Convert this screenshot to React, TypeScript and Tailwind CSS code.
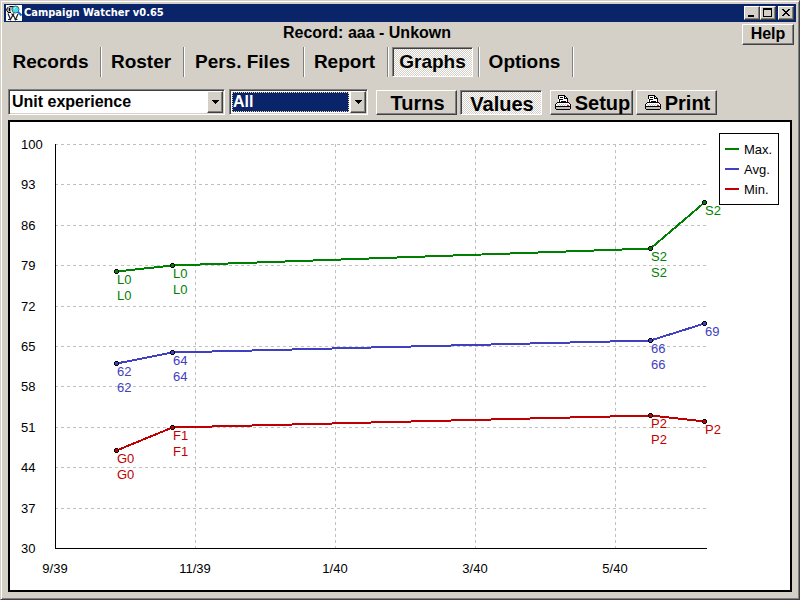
import type { ReactNode } from "react";

const font = "font-['Liberation_Sans',Arial,sans-serif]";
const raised =
  "border border-t-white border-l-white border-r-[#404040] border-b-[#404040] bg-[#d4d0c8] shadow-[inset_-1px_-1px_0_#808080]";
const pressed =
  "border border-t-[#808080] border-l-[#808080] border-r-white border-b-white shadow-[inset_1px_1px_0_#404040] bg-[repeating-conic-gradient(#ffffff_0_25%,#d4d0c8_0_50%)] bg-size-[2px_2px]";

const tabs = [
  { name: "Records", width: "w-[98px]" },
  { name: "Roster", width: "w-[83px]" },
  { name: "Pers. Files", width: "w-[120px]" },
  { name: "Report", width: "w-[84px]" },
  { name: "Graphs", width: "w-[91px]" },
  { name: "Options", width: "w-[94px]" },
];

function AppIcon() {
  return (
    <svg width="16" height="16" viewBox="0 0 16 16" className="shrink-0 bg-white">
      <path d="M2 1.5h4L5 7H2.5L1 5V3z" fill="#a0a0a0" />
      <path d="M3.5 1.5h8M1.5 2.5L.5 5l1.5 2.5h3M3.5 3v3" fill="none" stroke="#000" />
      <circle cx="9.5" cy="4.5" r="3.5" fill="#40e0e8" stroke="#506070" />
      <path d="M8 3.5l1.500-1" stroke="#fff" />
      <path d="M12 7l3.500 3.500" stroke="#1060d0" strokeWidth="2" />
      <path d="M2 8.500l2.500 6 2.500-5 2.500 5 2.500-5.500M5.500 8.500l1.500 2 1-2M2 14.500h3M8.500 14.500h3" fill="none" stroke="#202020" strokeWidth="1.200" />
    </svg>
  );
}

function PrinterIcon() {
  return (
    <svg width="16" height="16" viewBox="0 0 16 16" shapeRendering="crispEdges" aria-hidden="true">
      <path d="M4 1h6l2 3v5H3V4h1z" fill="#fff" />
      <path d="M3 0h7v1H3zM3 1h1v3H3zM4 4h1v3H4zM10 1h1v1h-1zM11 2h1v1h-1zM9 1h1v3H9zM10 3h3v1h-3zM12 4h1v3h-1zM5 2h3v1H5zM5 4h3v1H5zM6 6h5v1H6z" fill="#000" />
      <path d="M1 8h14v6H1z" fill="#fff" />
      <path d="M1 12h14v2H1z" fill="#c0c0c0" />
      <path d="M2 9h1v1H2zM4 9h1v1H4zM6 9h1v1H6zM8 9h1v1H8zM10 9h1v1h-1zM12 9h1v1h-1zM3 10h1v1H3zM5 10h1v1H5zM7 10h1v1H7zM9 10h1v1H9z" fill="#c0c0c0" />
      <path d="M2 7h12v1H2zM1 8h1v1H1zM14 8h1v1h-1zM0 9h1v5H0zM15 9h1v5h-1zM1 11h14v1H1zM1 14h14v1H1z" fill="#000" />
      <path d="M12 10h2v1h-2z" fill="#f00" />
    </svg>
  );
}

function ToolButton({ children, width, active = false }: { children: ReactNode; width: string; active?: boolean }) {
  return (
    <button
      aria-pressed={active}
      className={`flex h-[25px] shrink-0 items-center justify-center gap-1 text-[20px] leading-5 font-bold ${width} ${active ? `${pressed} pt-1 pl-0.5` : `${raised} pt-0.5 pl-0.5`}`}
    >
      {children}
    </button>
  );
}

function Combo({ label, value, width, focused = false }: { label: string; value: string; width: string; focused?: boolean }) {
  return (
    <div
      className={`relative h-[26px] shrink-0 border border-t-[#808080] border-l-[#808080] border-r-white border-b-white bg-white p-0.5 shadow-[inset_1px_1px_0_#404040,inset_-1px_-1px_0_#d4d0c8] ${width}`}
    >
      <select
        aria-label={label}
        className={`block h-5 w-[calc(100%-16px)] appearance-none text-[16px] leading-4 font-bold outline-none ${focused ? "border border-dotted border-[#f5db95] bg-[#0a246a] text-white" : "pl-px"}`}
      >
        <option>{value}</option>
      </select>
      <span className={`pointer-events-none absolute top-px right-px flex h-[22px] w-4 items-center justify-center ${raised}`}>
        <svg width="7" height="4" viewBox="0 0 7 4" shapeRendering="crispEdges">
          <path d="M0 0h7v1H0zM1 1h5v1H1zM2 2h3v1H2zM3 3h1v1H3z" />
        </svg>
      </span>
    </div>
  );
}

const rows = [
  { label: "100", y: 144 },
  { label: "93", y: 184 },
  { label: "86", y: 225 },
  { label: "79", y: 265 },
  { label: "72", y: 306 },
  { label: "65", y: 346 },
  { label: "58", y: 386 },
  { label: "51", y: 427 },
  { label: "44", y: 467 },
  { label: "37", y: 508 },
  { label: "30", y: 548 },
];
const columns = [
  { label: "9/39", x: 55 },
  { label: "11/39", x: 195 },
  { label: "1/40", x: 335 },
  { label: "3/40", x: 475 },
  { label: "5/40", x: 615 },
];
const series = [
  {
    name: "Max.",
    color: "#008000",
    points: [
      { x: 116, y: 271, labels: ["L0", "L0"] },
      { x: 172, y: 265, labels: ["L0", "L0"] },
      { x: 650, y: 248, labels: ["S2", "S2"] },
      { x: 704, y: 202, labels: ["S2"] },
    ],
  },
  {
    name: "Avg.",
    color: "#4040c0",
    points: [
      { x: 116, y: 363, labels: ["62", "62"] },
      { x: 172, y: 352, labels: ["64", "64"] },
      { x: 650, y: 340, labels: ["66", "66"] },
      { x: 704, y: 323, labels: ["69"] },
    ],
  },
  {
    name: "Min.",
    color: "#c00000",
    points: [
      { x: 116, y: 450, labels: ["G0", "G0"] },
      { x: 172, y: 427, labels: ["F1", "F1"] },
      { x: 650, y: 415, labels: ["P2", "P2"] },
      { x: 704, y: 421, labels: ["P2"] },
    ],
  },
];

function Chart() {
  return (
    <svg
      viewBox="10 122 780 468"
      preserveAspectRatio="xMinYMin meet"
      className="h-full w-full text-[13px]"
      shapeRendering="crispEdges"
      role="img"
      aria-label="Unit experience over time"
    >
      <g fill="none" stroke="#c0c0c0" strokeDasharray="3 3">
        {rows.slice(0, -1).map((r) => (
          <path key={r.y} d={`M55 ${r.y + 0.5}H706`} />
        ))}
        {columns.slice(1).map((c) => (
          <path key={c.x} d={`M${c.x + 0.5} 144V548`} />
        ))}
      </g>
      <path d="M55.5 144V548.5H707" fill="none" stroke="#000" />
      {rows.map((r) => (
        <text key={r.y} x="21" y={r.y + 5}>
          {r.label}
        </text>
      ))}
      {columns.map((c) => (
        <text key={c.x} x={c.x} y="573" textAnchor="middle">
          {c.label}
        </text>
      ))}
      {series.map((s) => (
        <g key={s.name}>
          <polyline points={s.points.map((p) => `${p.x},${p.y}`).join(" ")} transform="translate(0.5 0.5)" fill="none" stroke={s.color} strokeWidth="2" />
          {s.points.map((p) => (
            <g key={p.x}>
              <path d={`M${p.x - 1} ${p.y - 2}h3v1h1v3h-1v1h-3v-1h-1v-3h1z`} fill="#000" />
              <rect x={p.x - 1} y={p.y - 1} width="3" height="3" fill={s.color} />
              {p.labels.map((t, i) => (
                <text key={i} x={p.x + 1} y={p.y + 13 + i * 16} fill={s.color}>
                  {t}
                </text>
              ))}
            </g>
          ))}
        </g>
      ))}
      <rect x="719.5" y="133.5" width="59" height="71" fill="#fff" stroke="#000" />
      {series.map((s, i) => (
        <g key={s.name}>
          <rect x="725" y={148 + i * 20} width="14" height="2" fill={s.color} />
          <text x="744" y={154 + i * 20}>{s.name}</text>
        </g>
      ))}
    </svg>
  );
}

function CaptionButton({ label, children }: { label: string; children: ReactNode }) {
  return (
    <button aria-label={label} className={`flex h-3.5 w-4 items-center justify-center ${raised}`}>
      <svg width="12" height="10" viewBox="0 0 12 10" shapeRendering="crispEdges">
        {children}
      </svg>
    </button>
  );
}

export default function App() {
  return (
    <div className={`flex h-screen flex-col border border-t-[#d4d0c8] border-l-[#d4d0c8] border-r-[#404040] border-b-[#404040] bg-[#d4d0c8] p-[3px] text-black shadow-[inset_1px_1px_0_#ffffff,inset_-1px_-1px_0_#808080] ${font}`}>
      <header className="flex h-[18px] shrink-0 items-center bg-[#0a246a] px-0.5">
        <AppIcon />
        <h1 className="ml-0.5 flex-1 font-['DejaVu_Sans_Condensed','DejaVu_Sans',sans-serif] text-[11px] leading-4 font-bold text-white">Campaign Watcher v0.65</h1>
        <CaptionButton label="Minimize">
          <path d="M2 7h6v2H2z" />
        </CaptionButton>
        <CaptionButton label="Maximize">
          <path d="M1 0h9v9H1zM2 2v6h7V2z" fillRule="evenodd" />
        </CaptionButton>
        <span className="w-0.5" />
        <CaptionButton label="Close">
          <path d="M2 1h2v1h1v1h2V2h1V1h2v1H9v1H8v1H7v1h1v1h1v1h1v1H8V7H7V6H5v1H4v1H2V7h1V6h1V5h1V4H4V3H3V2H2z" />
        </CaptionButton>
      </header>
      <div className="flex h-[25px] shrink-0 items-start">
        <h2 className="flex-1 pt-px pr-3 text-center text-[16px] leading-5 font-bold">Record: aaa - Unkown</h2>
        <button className={`mt-0.5 mr-0.5 h-[21px] w-[52px] pb-0.5 text-[16px] leading-4 font-bold ${raised}`}>Help</button>
      </div>
      <nav className="flex h-[30px] shrink-0">
        {tabs.map((t) => (
          <div key={t.name} className={`shrink-0 border-r border-white shadow-[inset_-1px_0_0_#808080] ${t.width}`}>
            <button
              aria-current={t.name === "Graphs" ? "page" : undefined}
              className={`text-[19px] leading-7 font-bold ${t.name === "Graphs" ? `ml-[3px] h-full w-[81px] ${pressed}` : "h-full w-full pr-1"}`}
            >
              {t.name}
            </button>
          </div>
        ))}
      </nav>
      <div className="mt-3 flex h-[26px] shrink-0 items-center pl-1">
        <Combo label="Statistic" value="Unit experience" width="w-[217px]" />
        <span className="w-1" />
        <Combo label="Units" value="All" width="w-[139px]" focused />
        <div className="ml-2 flex gap-[3px]">
          <ToolButton width="w-[81px]">Turns</ToolButton>
          <ToolButton width="w-[82px]" active>Values</ToolButton>
        </div>
        <div className="ml-2 flex gap-[3px]">
          <ToolButton width="w-[83px]"><PrinterIcon />Setup</ToolButton>
          <ToolButton width="w-[81px]"><PrinterIcon />Print</ToolButton>
        </div>
      </div>
      <main className="mx-1 mt-[5px] mb-1 min-h-0 flex-1 border-2 border-black bg-white">
        <Chart />
      </main>
    </div>
  );
}
